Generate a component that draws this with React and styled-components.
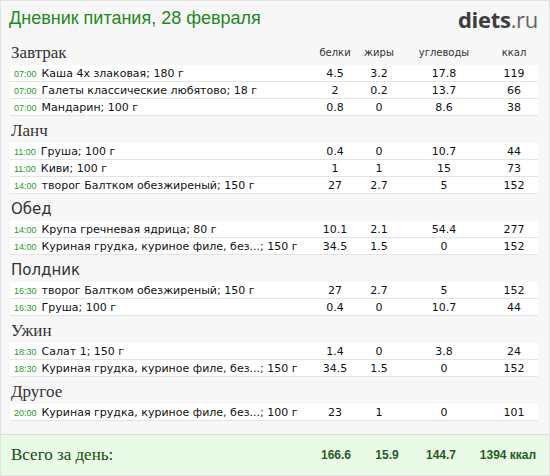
import React from "react";
import styled, { createGlobalStyle } from "styled-components";

const GlobalStyle = createGlobalStyle`
  html, body {
    margin: 0;
    padding: 0;
    background: #ffffff;
  }
`;

const meals = [
  {
    title: "Завтрак",
    items: [
      ["07:00", "Каша 4х злаковая; 180 г", "4.5", "3.2", "17.8", "119"],
      ["07:00", "Галеты классические любятово; 18 г", "2", "0.2", "13.7", "66"],
      ["07:00", "Мандарин; 100 г", "0.8", "0", "8.6", "38"],
    ],
  },
  {
    title: "Ланч",
    items: [
      ["11:00", "Груша; 100 г", "0.4", "0", "10.7", "44"],
      ["11:00", "Киви; 100 г", "1", "1", "15", "73"],
      ["14:00", "творог Балтком обезжиреный; 150 г", "27", "2.7", "5", "152"],
    ],
  },
  {
    title: "Обед",
    sans: true,
    items: [
      ["14:00", "Крупа гречневая ядрица; 80 г", "10.1", "2.1", "54.4", "277"],
      ["14:00", "Куриная грудка, куриное филе, без...; 150 г", "34.5", "1.5", "0", "152"],
    ],
  },
  {
    title: "Полдник",
    sans: true,
    items: [
      ["16:30", "творог Балтком обезжиреный; 150 г", "27", "2.7", "5", "152"],
      ["16:30", "Груша; 100 г", "0.4", "0", "10.7", "44"],
    ],
  },
  {
    title: "Ужин",
    items: [
      ["18:30", "Салат 1; 150 г", "1.4", "0", "3.8", "24"],
      ["18:30", "Куриная грудка, куриное филе, без...; 150 г", "34.5", "1.5", "0", "152"],
    ],
  },
  {
    title: "Другое",
    items: [
      ["20:00", "Куриная грудка, куриное филе, без...; 100 г", "23", "1", "0", "101"],
    ],
  },
];

const columns = "1fr 50px 38px 92px 48px";
// totals sit a little differently from the table columns
const totalColumns = "1fr 68px 34px 74px 60px";

const Page = styled.div`
  width: 550px;
  height: 476px;
  box-sizing: border-box;
  border: 1px solid #e2e2e2;
  background: #f7f7f7;
  display: flex;
  flex-direction: column;
  overflow: hidden;
`;

const Top = styled.div`
  height: 37px;
  display: flex;
  justify-content: space-between;
  align-items: flex-start;
  padding: 0 11px 0 8px;
`;

const Title = styled.h1`
  margin: 7px 0 0;
  font-family: "Liberation Sans", Arial, sans-serif;
  font-weight: normal;
  font-size: 18px;
  color: #23891f;
`;

const Logo = styled.div`
  margin-top: 3px;
  font-family: "Open Sans", "Liberation Sans", sans-serif;
  font-size: 22px;
  letter-spacing: -0.3px;
  color: #444;

  b {
    font-weight: 700;
    color: #3d3d3d;
  }
  span {
    color: #666;
  }
`;

const Body = styled.div`
  padding: 0 11px 0 9px;
`;

const MealHead = styled.div`
  height: 27px;
  display: grid;
  grid-template-columns: ${columns};
  align-items: center;
  padding-top: 2px;
  box-sizing: border-box;
`;

const MealTitle = styled.div`
  font-family: ${(p) =>
    p.$sans ? '"DejaVu Sans", sans-serif' : '"Liberation Serif", serif'};
  font-size: ${(p) => (p.$sans ? "15px" : "17px")};
  color: #333;
  padding-left: 1px;
`;

const ColLabel = styled.div`
  text-align: center;
  font-family: "DejaVu Sans", Verdana, sans-serif;
  font-size: 10px;
  color: #333;
`;

const Row = styled.div`
  height: 17px;
  box-sizing: border-box;
  background: #fff;
  border-bottom: 1px solid #e4e4e4;
  display: grid;
  grid-template-columns: ${columns};
  align-items: center;
  font-family: "DejaVu Sans", Verdana, sans-serif;
  font-size: 11px;
  color: #111;
`;

const Name = styled.div`
  display: flex;
  align-items: baseline;
  gap: 5px;
  padding-left: 4px;
  white-space: nowrap;
  overflow: hidden;
`;

const Time = styled.span`
  font-family: "Liberation Sans", Arial, sans-serif;
  font-size: 9px;
  color: #1f9a1f;
`;

const Num = styled.div`
  text-align: center;
`;

const Footer = styled.div`
  margin-top: auto;
  height: 40px;
  border-top: 1px solid #dcdcdc;
  background: #e9fbe6;
  display: grid;
  grid-template-columns: ${totalColumns};
  align-items: center;
  padding: 0 11px 0 9px;
`;

const Total = styled.div`
  font-family: "Liberation Serif", serif;
  font-size: 17px;
  color: #0f4f0f;
  padding-left: 1px;
`;

const TotalNum = styled.div`
  text-align: center;
  font-family: "Liberation Sans", Arial, sans-serif;
  font-weight: bold;
  font-size: 12px;
  color: #1f5e1f;
  white-space: nowrap;
`;

export default function App() {
  return (
    <>
      <GlobalStyle />
      <Page>
        <Top>
          <Title>Дневник питания, 28 февраля</Title>
          <Logo>
            <b>diets</b>
            <span>.ru</span>
          </Logo>
        </Top>
        <Body>
          {meals.map((meal, i) => (
            <div key={meal.title}>
              <MealHead>
                <MealTitle $sans={meal.sans}>{meal.title}</MealTitle>
                {i === 0 && (
                  <>
                    <ColLabel>белки</ColLabel>
                    <ColLabel>жиры</ColLabel>
                    <ColLabel>углеводы</ColLabel>
                    <ColLabel>ккал</ColLabel>
                  </>
                )}
              </MealHead>
              {meal.items.map((it, j) => (
                <Row key={j}>
                  <Name>
                    <Time>{it[0]}</Time>
                    {it[1]}
                  </Name>
                  <Num>{it[2]}</Num>
                  <Num>{it[3]}</Num>
                  <Num>{it[4]}</Num>
                  <Num>{it[5]}</Num>
                </Row>
              ))}
            </div>
          ))}
        </Body>
        <Footer>
          <Total>Всего за день:</Total>
          <TotalNum>166.6</TotalNum>
          <TotalNum>15.9</TotalNum>
          <TotalNum>144.7</TotalNum>
          <TotalNum>1394 ккал</TotalNum>
        </Footer>
      </Page>
    </>
  );
}
